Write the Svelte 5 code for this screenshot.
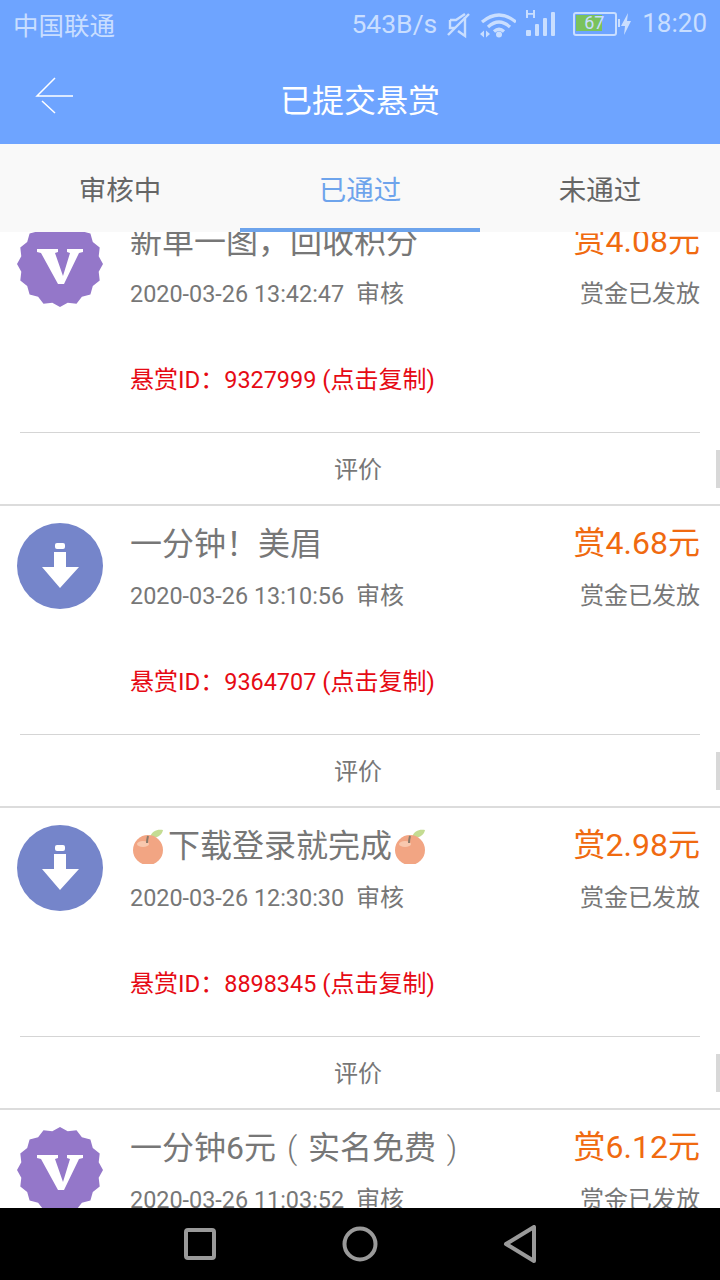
<script>
  // scalloped badge outline, 16 shallow points
  function badge() {
    let d = "";
    for (let i = 0; i < 32; i++) {
      let a = (Math.PI * i) / 16 - Math.PI / 2;
      let r = i % 2 === 0 ? 43 : 39.5;
      d += `${i === 0 ? "M" : "L"}${(43 + r * Math.cos(a)).toFixed(1)} ${(43 + r * Math.sin(a)).toFixed(1)}`;
    }
    return d + "Z";
  }
  const badgePath = badge();

  const tabs = ["审核中", "已通过", "未通过"];
  const orders = [
    { icon: "v", title: "新单一图，回收积分", price: "4.08", time: "2020-03-26 13:42:47", id: "9327999" },
    { icon: "d", title: "一分钟！美眉", price: "4.68", time: "2020-03-26 13:10:56", id: "9364707" },
    { icon: "d", title: "下载登录就完成", apples: true, price: "2.98", time: "2020-03-26 12:30:30", id: "8898345" },
    { icon: "v", title: "一分钟6元", note: "实名免费", price: "6.12", time: "2020-03-26 11:03:52", id: "9101126" },
  ];
</script>

{#snippet apple()}
  <svg class="apple" viewBox="0 0 36 36" aria-hidden="true">
    <path d="M19 9c2-6 7-8 13-7-1 5-6 9-13 7z" fill="#c4dc92" />
    <circle cx="17" cy="22" r="15" fill="#f2a583" />
    <ellipse cx="12" cy="16" rx="6" ry="3" fill="#f8c8ae" />
    <path d="M16 15c0-3 .5-5 1-7" stroke="#8a7a6a" stroke-width="2" fill="none" />
  </svg>
{/snippet}

<div class="screen">
  <header>
    <div class="status">
      <span class="carrier">中国联通</span>
      <div class="indicators">
        <span class="speed">543B/s</span>
        <svg class="mute" width="26" height="28" viewBox="0 0 26 28" fill="none" stroke="#c9deff" stroke-width="2.4">
          <path d="M3 9v8h5M3 9h6l9-6M18 6v19l-7-5" />
          <path d="M1 24 22 3" />
        </svg>
        <svg class="wifi" width="36" height="26" viewBox="0 0 36 26" fill="none" stroke="#c9deff" stroke-width="3.2">
          <path d="M2 10Q19-4 36 10M8 15Q19 5 30 15M14 19.500Q19 15 24 19.500" />
          <circle cx="19" cy="22.500" r="3" fill="#c9deff" stroke="none" />
          <path d="M4 18.500 0 22l4 3.500zM6 18.500 10 22l-4 3.500z" fill="#c9deff" stroke="none" />
        </svg>
        <svg class="signal" width="29" height="28" viewBox="0 0 29 28" fill="#c9deff">
          <rect x="0" y="21" width="5" height="6" rx="1" />
          <rect x="9" y="15" width="4" height="12" rx="1" />
          <rect x="17" y="9" width="4" height="18" rx="1" />
          <rect x="25" y="3" width="4" height="24" rx="1" />
          <path d="M0 1h2v3h5v-3h2v8h-2v-3.200h-5v3.200h-2z" />
        </svg>
        <div class="battery">
          <div class="charge">67</div>
        </div>
        <svg class="bolt" width="10" height="22" viewBox="0 0 10 22" fill="#c9deff">
          <path d="M7 0 0 13h4l-1 9 7-14H6z" />
        </svg>
        <span class="clock">18:20</span>
      </div>
    </div>
    <div class="titlebar">
      <svg class="back" width="38" height="38" viewBox="0 0 38 38" fill="none" stroke="#fff" stroke-width="1.500">
        <path d="M20 1 2 19h36M7 24l13 12" />
      </svg>
      <h1>已提交悬赏</h1>
    </div>
  </header>

  <nav>
    {#each tabs as tab, i}
      <div class="tab" class:active={i === 1}>{tab}</div>
    {/each}
  </nav>

  <main>
    <div class="list">
      {#each orders as o}
        <article>
          <div class="top">
            {#if o.icon === "v"}
              <svg class="icon" viewBox="0 0 86 86">
                <path d={badgePath} fill="#9477c9" />
                <path d="M20 28H41V31L38 32 46 55 53 32 50 31V28H66V31L62 32 47 63H41L24 32 20 31Z" fill="#fff" />
              </svg>
            {:else}
              <svg class="icon" viewBox="0 0 86 86">
                <circle cx="43" cy="43" r="43" fill="#7585ca" />
                <rect x="38" y="20" width="10" height="6" rx="2" fill="#fff" />
                <path d="M37 29h12v15h13L43 65 25 44h12z" fill="#fff" />
              </svg>
            {/if}
            <div class="body">
              <div class="row">
                <div class="name">
                  {#if o.apples}{@render apple()}{/if}{o.title}{#if o.note}<span class="paren">(</span>{o.note}<span class="paren">)</span>{/if}{#if o.apples}{@render apple()}{/if}
                </div>
                <div class="price">赏{o.price}元</div>
              </div>
              <div class="row meta">
                <div><span class="num">{o.time}</span>&nbsp;&nbsp;审核</div>
                <div>赏金已发放</div>
              </div>
              <div class="ref">悬赏ID：<span class="num">{o.id}</span> (点击复制)</div>
            </div>
          </div>
          <div class="rate">评价</div>
          <i class="tick"></i>
        </article>
      {/each}
    </div>
  </main>

  <footer>
    <svg width="32" height="32" viewBox="0 0 32 32" fill="none" stroke="#9a9a9a" stroke-width="4">
      <rect x="2" y="2" width="28" height="28" rx="2" />
    </svg>
    <svg width="36" height="36" viewBox="0 0 36 36" fill="none" stroke="#9a9a9a" stroke-width="4">
      <circle cx="18" cy="18" r="15.500" />
    </svg>
    <svg width="34" height="38" viewBox="0 0 34 38" fill="none" stroke="#9a9a9a" stroke-width="4" stroke-linejoin="round">
      <path d="M31 2v34L3 19z" />
    </svg>
  </footer>
</div>

<style>
  :global(body) {
    margin: 0;
    background: #fff;
  }

  .screen {
    display: flex;
    flex-direction: column;
    height: 1280px;
    overflow: hidden;
    font-family: Roboto, "Noto Sans CJK SC", sans-serif;
  }

  header {
    height: 144px;
    background: #6ea4ff;
    flex: none;
  }

  .status {
    display: flex;
    justify-content: space-between;
    align-items: center;
    height: 48px;
    padding: 0 13px 2px;
    box-sizing: border-box;
    color: #c9deff;
    font-size: 25.500px;
  }

  .indicators {
    display: flex;
    align-items: center;
  }

  .speed {
    font-size: 26.500px;
  }

  .mute {
    margin: 4px 0 0 10px;
  }

  .wifi {
    margin: 4px 0 0 7px;
  }

  .signal {
    margin-left: 10px;
  }

  .battery {
    width: 38px;
    height: 18px;
    margin: 2px 0 0 18px;
    border: 2px solid #c9deff;
    border-radius: 3px;
    padding: 1px;
    position: relative;
  }

  .battery::after {
    content: "";
    position: absolute;
    right: -5px;
    top: 5px;
    width: 2px;
    height: 8px;
    background: #c9deff;
  }

  .charge {
    width: 26px;
    height: 16px;
    background: #7ac25c;
    font-size: 18px;
    line-height: 16px;
    padding-left: 8px;
    box-sizing: border-box;
    white-space: nowrap;
  }

  .bolt {
    margin: 2px 0 0 4px;
  }

  .clock {
    margin-left: 11px;
    font-size: 26px;
  }

  .titlebar {
    display: flex;
    align-items: center;
    justify-content: center;
    height: 96px;
    position: relative;
  }

  .back {
    position: absolute;
    left: 35px;
    top: 29px;
  }

  h1 {
    margin: 4px 0 0;
    color: #fff;
    font-size: 32px;
    font-weight: 400;
  }

  nav {
    display: grid;
    grid-template-columns: repeat(3, 1fr);
    height: 88px;
    background: #f9f9f9;
    flex: none;
  }

  .tab {
    display: flex;
    align-items: center;
    justify-content: center;
    padding-top: 4px;
    color: #666;
    font-size: 27.500px;
    border-bottom: 4px solid transparent;
  }

  .tab.active {
    color: #6ea4ec;
    border-bottom-color: #6ea4ec;
  }

  main {
    flex: 1;
    overflow: hidden;
  }

  .list {
    margin-top: -28px;
  }

  article {
    height: 302px;
    box-sizing: border-box;
    border-bottom: 2px solid #dcdcdc;
    position: relative;
  }

  .top {
    display: flex;
    height: 229px;
    margin: 0 20px;
    border-bottom: 1px solid #d5d5d5;
    box-sizing: border-box;
  }

  .icon {
    width: 86px;
    height: 86px;
    flex: none;
    margin: 17px 0 0 -3px;
  }

  .body {
    flex: 1;
    margin-left: 27px;
    padding-top: 16px;
  }

  .row {
    display: flex;
    justify-content: space-between;
    align-items: center;
  }

  .name {
    display: flex;
    align-items: center;
    color: #777;
    font-size: 32px;
    line-height: 44px;
  }

  .paren {
    width: 32px;
    text-align: center;
    font-weight: 300;
  }

  .apple {
    width: 36px;
    height: 36px;
    margin: 0 1px;
  }

  .price {
    color: #f06a10;
    font-size: 32px;
    line-height: 42px;
    margin-bottom: 2px;
  }

  .meta {
    margin-top: 12px;
    color: #777;
    font-size: 24px;
    line-height: 36px;
  }

  .num {
    font-size: 23.400px;
  }

  .ref {
    margin-top: 50px;
    color: #e60a14;
    font-size: 24px;
    line-height: 36px;
  }

  .rate {
    display: flex;
    align-items: center;
    justify-content: center;
    height: 71px;
    padding: 0 4px 2px 0;
    box-sizing: border-box;
    color: #777;
    font-size: 24px;
  }

  .tick {
    position: absolute;
    right: 0;
    top: 246px;
    width: 4px;
    height: 38px;
    background: #d8d8d8;
  }

  footer {
    display: grid;
    grid-template-columns: 80px 80px 80px;
    justify-content: center;
    justify-items: center;
    align-items: center;
    column-gap: 80px;
    height: 72px;
    background: #000;
    flex: none;
  }
</style>
